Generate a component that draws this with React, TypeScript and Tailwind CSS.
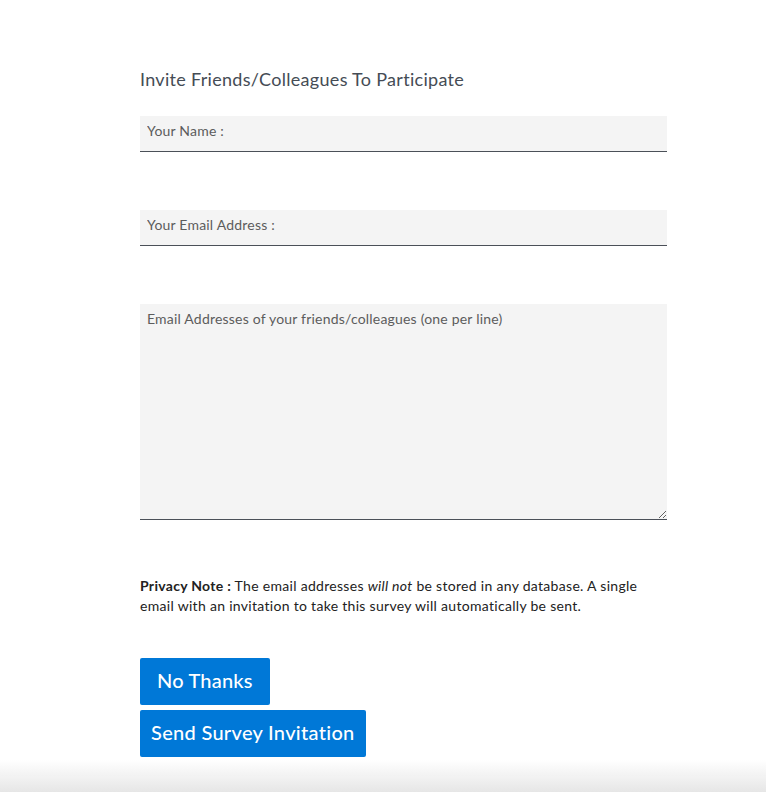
export default function App() {
  return (
    <div className="relative min-h-[792px] bg-white font-['Lato',sans-serif]">
      <div className="ml-[140px] w-[527px] pt-[66px] pb-[40px]">
        <h2 className="text-[18px] leading-[26px] tracking-[0.3px] text-[#454c55]">Invite Friends/Colleagues To Participate</h2>

        <form className="mt-[24px] flex flex-col">
          <input
            type="text"
            placeholder="Your Name :"
            className="h-[36px] w-full border-b border-[#4b5058] bg-[#f4f4f4] px-[7px] pb-[6px] text-[14px] tracking-[0.2px] text-[#333] outline-none placeholder:text-[#5c5c5c]"
          />
          <input
            type="email"
            placeholder="Your Email Address :"
            className="mt-[58px] h-[36px] w-full border-b border-[#4b5058] bg-[#f4f4f4] px-[7px] pb-[6px] text-[14px] tracking-[0.2px] text-[#333] outline-none placeholder:text-[#5c5c5c]"
          />
          <textarea
            placeholder="Email Addresses of your friends/colleagues (one per line)"
            className="mt-[58px] h-[216px] w-full border-b border-[#4b5058] bg-[#f4f4f4] px-[7px] pt-[4px] pb-[5px] text-[14px] tracking-[0.2px] text-[#333] outline-none placeholder:text-[#5c5c5c]"
          />

          <p className="mt-[56px] text-[14px] leading-[20px] tracking-[0.3px] text-[#222]">
            <strong className="font-bold">Privacy Note :</strong> The email addresses <em>will not</em> be stored in any
            database. A single email with an invitation to take this survey will automatically be sent.
          </p>

          <div className="mt-[42px] flex flex-col items-start gap-[5px]">
            <button type="button" className="h-[47px] rounded-[2px] bg-[#0078d7] px-[17px] pb-[3px] text-[20px] font-medium tracking-[0.2px] text-white">
              No Thanks
            </button>
            <button type="button" className="h-[47px] rounded-[2px] bg-[#0078d7] px-[11px] pb-[3px] text-[20px] font-medium tracking-[0.3px] text-white">
              Send Survey Invitation
            </button>
          </div>
        </form>
      </div>
      <div className="pointer-events-none fixed bottom-0 left-0 right-0 h-[32px] bg-gradient-to-b from-white/0 to-[#e6e6e6]" />
    </div>
  );
}
